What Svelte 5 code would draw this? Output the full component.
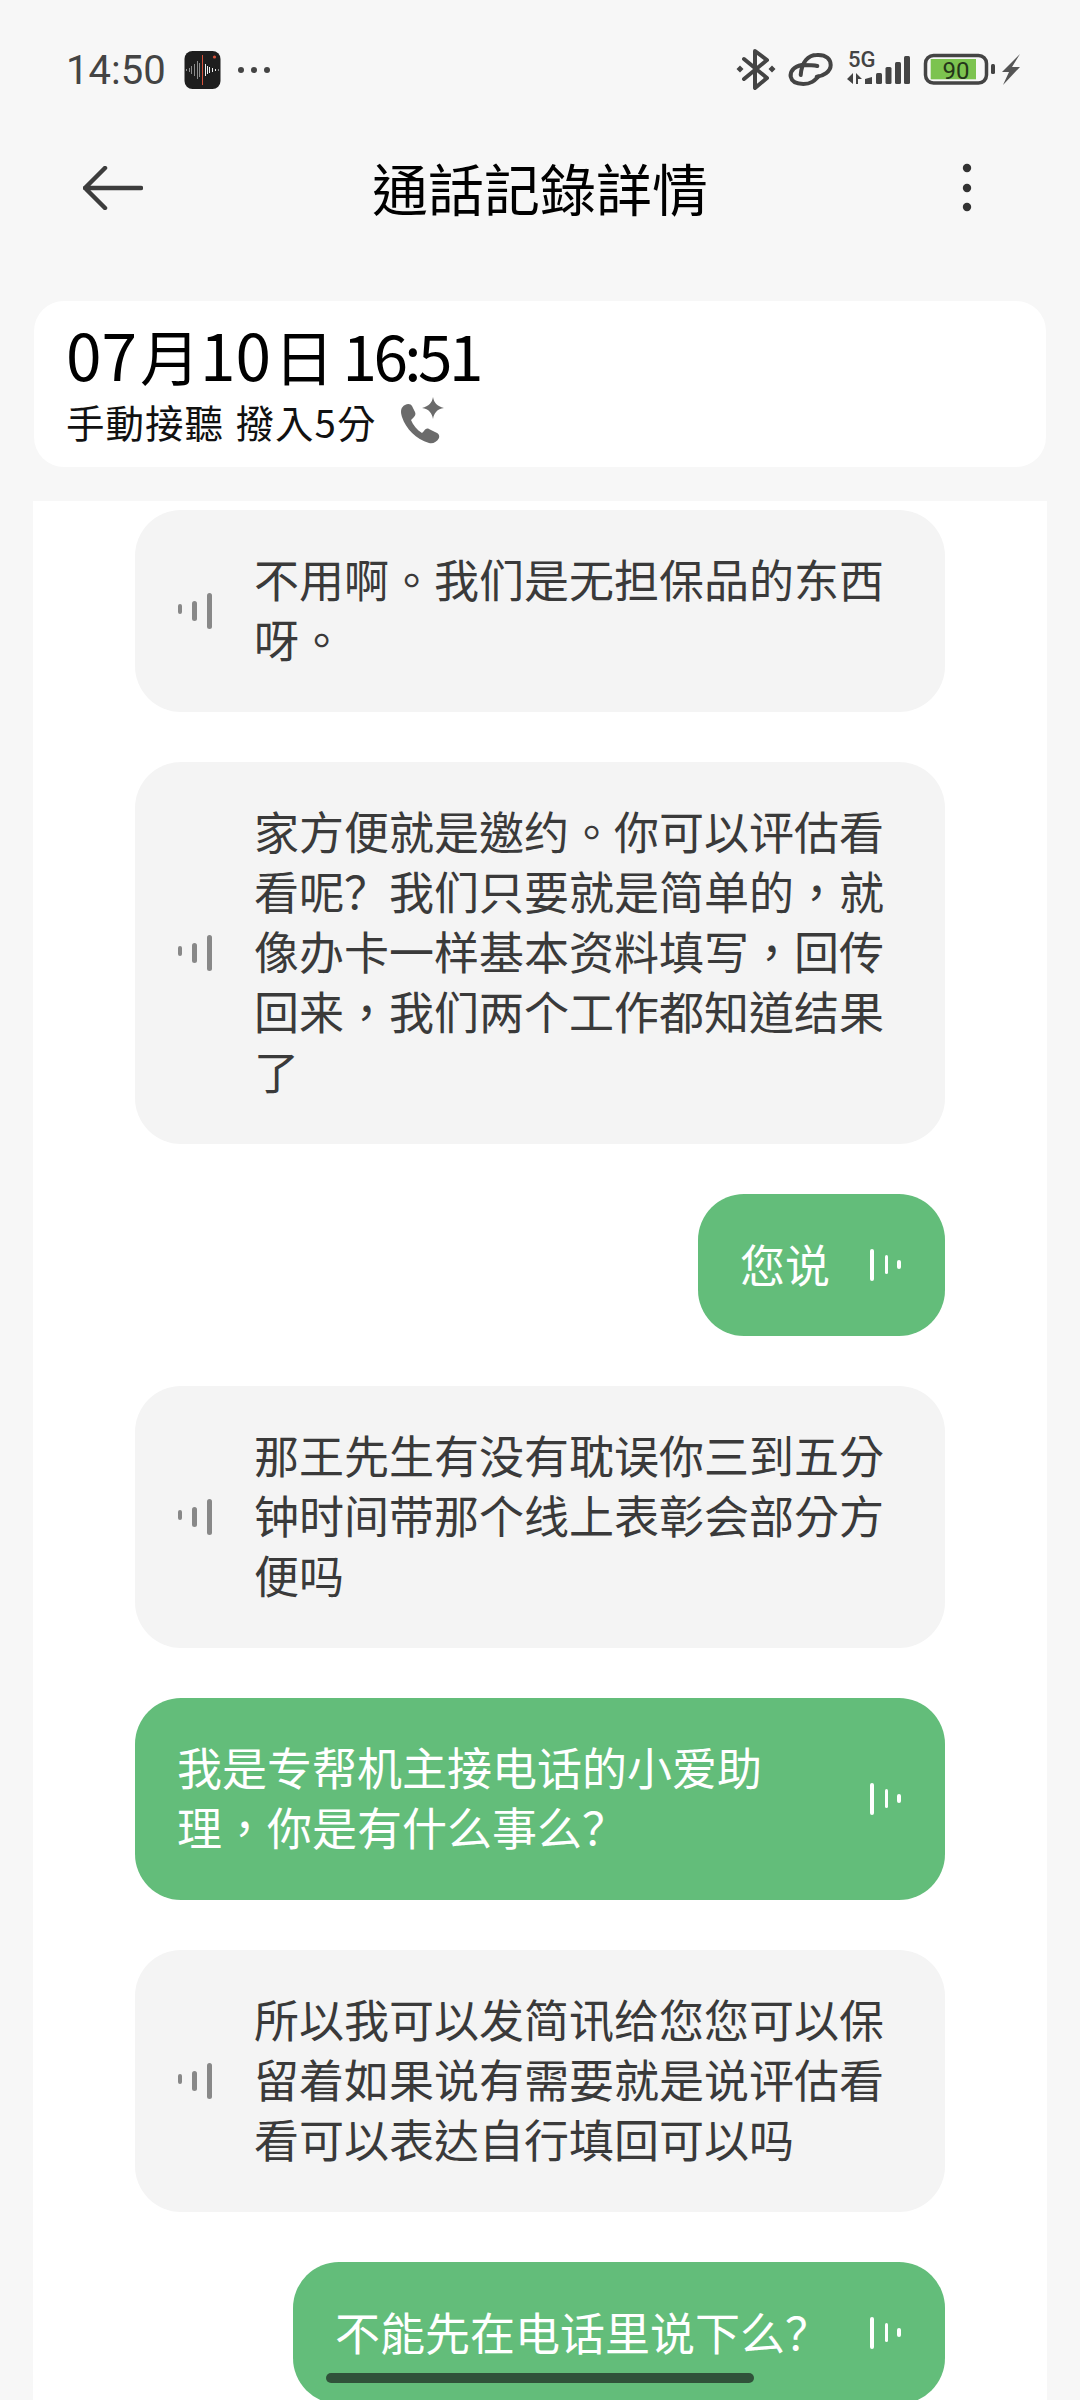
<script>
  const C = '\uFF0C';
  const Q = '\uFF1F';
  const messages = [
    { me: false, lines: ['不用啊。我们是无担保品的东西', '呀。'] },
    { me: false, lines: ['家方便就是邀约。你可以评估看', `看呢${Q}我们只要就是简单的${C}就`, `像办卡一样基本资料填写${C}回传`, `回来${C}我们两个工作都知道结果`, '了'] },
    { me: true, lines: ['您说'] },
    { me: false, lines: ['那王先生有没有耽误你三到五分', '钟时间带那个线上表彰会部分方', '便吗'] },
    { me: true, wide: true, lines: ['我是专帮机主接电话的小爱助', `理${C}你是有什么事么${Q}`] },
    { me: false, lines: ['所以我可以发简讯给您您可以保', '留着如果说有需要就是说评估看', '看可以表达自行填回可以吗'] },
    { me: true, lines: [`不能先在电话里说下么${Q}`] }
  ];
  const parts = (line) => line.split(Q);
</script>

<div class="page">
  <div class="status">
    <div class="status-left">
      <span class="time">14:50</span>
      <svg class="rec" viewBox="0 0 36 38" width="37" height="38">
        <rect width="36" height="38" rx="8" fill="#1e1e1e"/>
        <g stroke="#8d8d8d" stroke-width="1">
          <path d="M2 18v2M5 17v4M7 15v8M10 13v12M13 10v18M15 12v14"/>
        </g>
        <path d="M18 4v30" stroke="#d9533c" stroke-width="1"/>
        <g stroke="#eee" stroke-width="1">
          <path d="M21 13v12M23 15v8M25 16v6M28 17v4M31 18v2M34 18.500v1"/>
        </g>
        <circle cx="30" cy="6" r="1.600" fill="#d9533c"/>
      </svg>
      <svg class="more" viewBox="0 0 32 8" width="32" height="8">
        <circle cx="3" cy="4" r="3" fill="#444"/><circle cx="16" cy="4" r="3" fill="#444"/><circle cx="29" cy="4" r="3" fill="#444"/>
      </svg>
    </div>
    <svg class="status-right" viewBox="0 0 300 44" width="300" height="44">
      <g fill="none" stroke="#444" stroke-width="4" stroke-linejoin="round" stroke-linecap="round">
        <path d="M14 11L37 30L25 40V3L37 12L14 31"/>
        <path d="M70.700 27C71.700 13.700 78.300 7 86.700 7C96.700 6.300 100.700 12 100.700 17C100.700 23.700 93.300 28 86.700 28.700"/>
        <path d="M87.300 18C83.300 17 76.700 17 71.700 17C63.300 18.700 60 23.700 60.700 28.700C61.700 33.700 66.700 36 73.300 36C81.700 36 85 32 88.300 28.700"/>
      </g>
      <g fill="#444">
        <path d="M6.500 21l3.500-3.500 3.500 3.500-3.500 3.500zM38.500 21l3.500-3.500 3.500 3.500-3.500 3.500z"/>
        <path d="M117 31l6-6v11zM126 25l6 6h-4v5h-2z"/>
        <path d="M135 31l7-2v7h-7z"/>
        <rect x="146" y="25" width="6" height="11" rx="1.500"/>
        <rect x="155.500" y="19" width="6" height="17" rx="1.500"/>
        <rect x="165" y="14" width="6" height="22" rx="1.500"/>
        <rect x="174" y="8" width="6" height="28" rx="1.500"/>
      </g>
      <text x="118" y="19" class="five">5G</text>
      <rect x="195.500" y="7.500" width="61" height="27.500" rx="8" fill="none" stroke="#444" stroke-width="3.500"/>
      <rect x="200.700" y="11" width="45.300" height="20.300" fill="#7cc34f"/>
      <text x="226" y="31" class="batt" text-anchor="middle">90</text>
      <rect x="261" y="16" width="4" height="10" rx="1.500" fill="#444"/>
      <path d="M290 6L272 24H279L273 37L290 19H282L290 6Z" fill="#555"/>
    </svg>
  </div>

  <header class="bar">
    <svg class="back" viewBox="0 0 60 44" width="60" height="44">
      <path d="M22 2L2 22L22 42M2 22H58" fill="none" stroke="#3d3d3d" stroke-width="4.500" stroke-linecap="round" stroke-linejoin="round"/>
    </svg>
    <h1>通話記錄詳情</h1>
    <svg class="menu" viewBox="0 0 10 50" width="10" height="50">
      <circle cx="5" cy="5" r="4.200" fill="#333"/><circle cx="5" cy="25" r="4.200" fill="#333"/><circle cx="5" cy="44" r="4.200" fill="#333"/>
    </svg>
  </header>

  <section class="card">
    <div class="date"><span class="num">07</span><span class="cjk">月</span><span class="num">10</span><span class="cjk">日</span> <span class="num clock">16:51</span></div>
    <div class="sub">
      <span>手動接聽 撥入5分</span>
      <svg viewBox="0 0 46 48" width="46" height="48">
        <path d="M6 8C2 10 1 14 3 20C7 32 17 42 30 46C34 47 38 45 40 41C41 38 39 36 36 35L30 32C28 31 26 32 25 34L23 36C18 33 14 28 12 23L15 20C16 19 17 17 16 15L13 9C12 7 9 6 6 8Z" fill="#6b6b6b"/>
        <path d="M34 0C35 6 38 9 45 11C38 12 35 16 34 22C33 16 30 12 23 11C30 9 33 6 34 0Z" fill="#6b6b6b"/>
      </svg>
    </div>
  </section>

  <main class="panel">
    {#each messages as m}
      <div class="row" class:me={m.me}>
        <div class="bubble" class:green={m.me} class:wide={m.wide}>
          {#if !m.me}
            <svg class="wave" viewBox="0 0 34 36" width="34" height="36">
              <rect x="0" y="11" width="4" height="10" rx="2" fill="#888"/>
              <rect x="14" y="8" width="5" height="20" rx="2.500" fill="#888"/>
              <rect x="29" y="0" width="5" height="36" rx="2.500" fill="#888"/>
            </svg>
          {/if}
          <div class="text">
            {#each m.lines as l}
              <div>{#each parts(l) as p, i}{#if i > 0}<span class="q">{Q}</span>{/if}{p}{/each}</div>
            {/each}
          </div>
          {#if m.me}
            <svg class="wave-me" viewBox="0 0 32 32" width="32" height="32">
              <rect x="0" y="0" width="4" height="32" rx="2" fill="#fff"/>
              <rect x="15" y="6" width="3" height="19" rx="1.500" fill="#fff"/>
              <rect x="27" y="11" width="4" height="9" rx="2" fill="#fff"/>
            </svg>
          {/if}
        </div>
      </div>
    {/each}
  </main>

  <div class="handle"></div>
</div>

<style>
  :global(body) { margin: 0; background: #f7f7f7; }
  .page {
    position: relative;
    width: 1080px;
    height: 2400px;
    overflow: hidden;
    background: #f7f7f7;
    font-family: "Noto Sans CJK TC", "Noto Sans", sans-serif;
  }
  .status {
    height: 130px;
    box-sizing: border-box;
    padding: 48px 0 0 66px;
    display: flex;
    justify-content: space-between;
    align-items: flex-start;
  }
  .status-left { display: flex; align-items: center; height: 44px; }
  .time { font-family: Roboto, sans-serif; font-size: 40px; color: #444; width: 118px; }
  .more { margin-left: 17px; }
  .status-right { margin-right: 50px; }
  .five { font-family: Roboto, sans-serif; font-size: 22px; font-weight: 500; fill: #444; }
  .batt { font-family: Roboto, sans-serif; font-size: 24px; fill: #24361a; }
  .bar {
    height: 116px;
    box-sizing: border-box;
    padding: 0 108px;
    display: grid;
    grid-template-columns: 1fr auto 1fr;
    align-items: center;
  }
  .back { margin-left: -25px; }
  .menu { justify-self: end; }
  h1 {
    margin: 0;
    padding-bottom: 3px;
    font-size: 56px;
    font-weight: 400;
    color: #000;
    line-height: 1;
  }
  .card {
    margin: 55px 34px 0;
    height: 166px;
    box-sizing: border-box;
    padding: 17px 32px 0;
    background: #fff;
    border-radius: 30px;
  }
  .date {
    height: 70px;
    font-size: 60px;
    line-height: 70px;
    color: #000;
    white-space: nowrap;
  }
  .num { font-size: 64px; line-height: 70px; }
  .cjk { font-size: 60px; margin-left: 3px; }
  .clock { font-size: 62px; letter-spacing: -3.500px; margin-left: -5px; }
  .sub {
    display: flex;
    align-items: center;
    gap: 22px;
    margin-top: 8px;
    font-size: 38.500px;
    letter-spacing: 1px;
    word-spacing: 2px;
    line-height: 50px;
    color: #111;
  }
  .panel {
    margin: 34px 33px 0;
    padding: 9px 102px 0;
    background: #fff;
    display: flex;
    flex-direction: column;
    gap: 50px;
    height: 1900px;
  }
  .row { display: flex; }
  .row.me { justify-content: flex-end; }
  .bubble {
    width: 810px;
    box-sizing: border-box;
    display: flex;
    align-items: center;
    padding: 41px 0 41px 43px;
    gap: 42px;
    background: #f4f4f4;
    border-radius: 46px;
    color: #3a3a3a;
    font-size: 45px;
    line-height: 60px;
  }
  .wave { flex: none; }
  .text { white-space: nowrap; margin: -2px 0 2px; }
  .q { font-family: "Noto Sans CJK SC", sans-serif; }
  .bubble.green {
    width: auto;
    background: #63bd7a;
    color: #fff;
    padding: 46.500px 43px 46.500px 42px;
    gap: 40px;
    line-height: 49px;
  }
  .bubble.green.wide {
    width: 810px;
    justify-content: space-between;
    padding: 41px 43px 41px 42px;
    line-height: 60px;
  }
  .handle {
    position: absolute;
    left: 326px;
    top: 2373px;
    width: 428px;
    height: 10px;
    border-radius: 5px;
    background: #30523a;
  }
</style>
